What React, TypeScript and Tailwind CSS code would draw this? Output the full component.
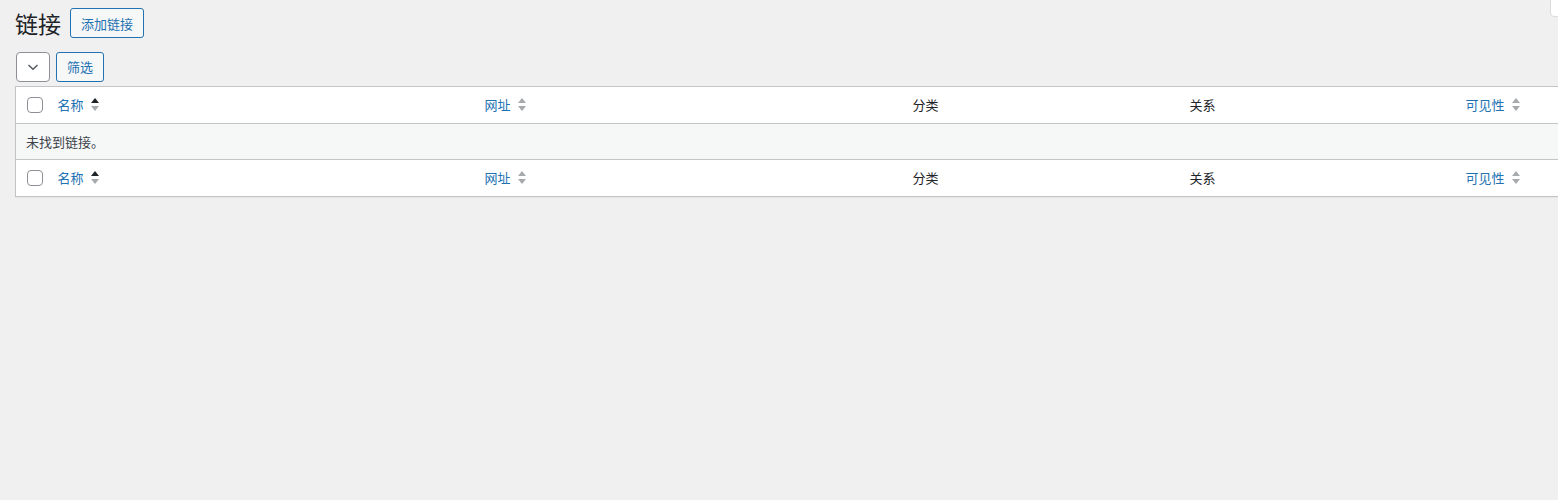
import React from 'react'

const FONT = "font-['Noto_Sans_CJK_SC','Liberation_Sans',sans-serif]"

// little up/down arrows next to a sortable header
const SortIcon = ({ active }: { active?: boolean }) => (
  <svg width="10" height="15" viewBox="0 0 10 15" className="ml-[6px] shrink-0">
    <polygon points="5,0 9,5 1,5" fill={active ? '#1d2327' : '#a7aaad'} />
    <polygon points="1,8 9,8 5,13" fill="#a7aaad" />
  </svg>
)

const Checkbox = () => (
  <span className="block w-4 h-4 rounded-[4px] border border-[#8c8f94] bg-white" />
)

const HeaderRow = () => (
  <tr className="h-[37px]">
    <td className="w-[34px] pl-[11px] align-middle">
      <Checkbox />
    </td>
    <th className="w-[427px] px-2 text-left font-normal">
      <span className="flex items-center text-[#2271b1]">
        名称
        <SortIcon active />
      </span>
    </th>
    <th className="w-[428px] px-2 text-left font-normal">
      <span className="flex items-center text-[#2271b1]">
        网址
        <SortIcon />
      </span>
    </th>
    <th className="w-[277px] px-2 text-left font-normal text-[#1d2327]">分类</th>
    <th className="w-[276px] px-2 text-left font-normal text-[#1d2327]">关系</th>
    <th className="w-[277px] px-2 text-left font-normal">
      <span className="flex items-center text-[#2271b1]">
        可见性
        <SortIcon />
      </span>
    </th>
  </tr>
)

export default function App() {
  return (
    <div className={`relative w-[1558px] h-[500px] overflow-hidden bg-[#f0f0f1] text-[13px] ${FONT}`}>
      {/* screen options tab, mostly off screen */}
      <div className="absolute right-[-20px] top-[-4px] w-[28px] h-[21px] bg-white border border-[#dcdcde] rounded-b-[4px]" />

      <div className="pl-[15px] pt-[7px]">
        <div className="flex items-center gap-[9px]">
          <h1 className="text-[23px] leading-[30px] text-[#1d2327] font-normal">链接</h1>
          <button className="h-[30px] px-[10px] mt-[1px] border border-[#2271b1] rounded-[3px] bg-[#f6f7f7] text-[#2271b1] text-[13px] leading-none">
            添加链接
          </button>
        </div>

        <div className="flex items-center gap-[6px] mt-[14px] pl-px">
          <div className="w-[34px] h-[30px] flex items-center justify-center border border-[#8c8f94] rounded-[4px] bg-white">
            <svg width="14" height="14" viewBox="0 0 14 14">
              <path d="M2.5 5 L7 9.2 L11.5 5" fill="none" stroke="#50575e" strokeWidth="1.4" />
            </svg>
          </div>
          <button className="h-[30px] px-[10px] pb-px border border-[#2271b1] rounded-[3px] bg-[#f6f7f7] text-[#2271b1] text-[13px] leading-none">
            筛选
          </button>
        </div>

        <table className="mt-[4px] w-[1720px] table-fixed border-collapse bg-white border border-[#c3c4c7] shadow-[0_1px_1px_rgba(0,0,0,0.04)]">
          <thead className="border-b border-[#c3c4c7]">
            <HeaderRow />
          </thead>
          <tbody>
            <tr className="h-[36px] bg-[#f6f7f7]">
              <td colSpan={6} className="px-[10px] text-[#3c434a]">未找到链接。</td>
            </tr>
          </tbody>
          <tfoot className="border-t border-[#c3c4c7]">
            <HeaderRow />
          </tfoot>
        </table>
      </div>
    </div>
  )
}
